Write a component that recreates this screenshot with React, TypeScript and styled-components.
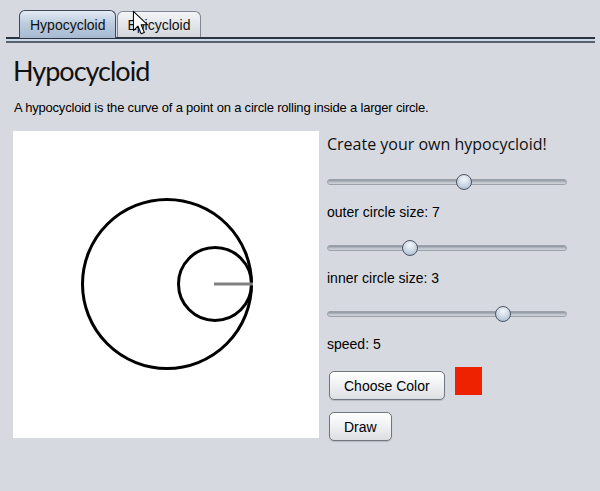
import React from "react";
import styled, { createGlobalStyle } from "styled-components";

const Global = createGlobalStyle`
  html, body { margin: 0; padding: 0; background: #d6d9df; }
  body { font-family: "Liberation Sans", Arial, sans-serif; color: #000; }
`;

const Page = styled.div`
  position: relative;
  width: 600px;
  height: 491px;
  background: #d6d9df;
  display: flex;
  flex-direction: column;
  overflow: hidden;
`;

const TabStrip = styled.div`
  display: flex;
  align-items: flex-end;
  padding: 10px 0 0 19px;
  height: 27px;
`;

const Tab = styled.div<{ $active?: boolean }>`
  box-sizing: border-box;
  height: ${(p) => (p.$active ? 28 : 26)}px;
  padding: 0 ${(p) => (p.$active ? 10 : 9)}px;
  margin-right: 1px;
  display: flex;
  align-items: center;
  font-size: 14px;
  border: 1px solid ${(p) => (p.$active ? "#3d4859" : "#7f8794")};
  border-bottom: none;
  border-radius: 6px 6px 0 0;
  background: ${(p) =>
    p.$active
      ? "linear-gradient(#e4ebf3 0%, #bccde0 45%, #a6b9d0 100%)"
      : "linear-gradient(#f4f5f7 0%, #e3e5e9 50%, #d3d6dc 100%)"};
  color: #111;
  margin-bottom: ${(p) => (p.$active ? -1 : 0)}px;
  position: relative;
`;

const TabRule = styled.div`
  margin: 0 5px 0 6px;
  height: 2px;
  background: #2c3440;
  border-bottom: 2px solid #c9d8ea;
  box-shadow: 0 2px 0 0 #59616d;
  margin-bottom: 2px;
`;

const Content = styled.div`
  padding: 11px 13px 0 13px;
  display: flex;
  flex-direction: column;
`;

const Title = styled.h1`
  margin: 0;
  font-family: Lato, "Open Sans", sans-serif;
  font-weight: 400;
  font-size: 27px;
  letter-spacing: -1px;
  line-height: 34px;
  color: #111;
`;

const Description = styled.p`
  margin: 11px 0 0 1px;
  font-size: 13px;
  letter-spacing: -0.2px;
  line-height: 18px;
`;

const Main = styled.div`
  display: flex;
  gap: 8px;
  margin-top: 14px;
`;

const Canvas = styled.div`
  width: 306px;
  height: 307px;
  background: #fff;
  flex: none;
`;

const Controls = styled.div`
  display: flex;
  flex-direction: column;
  width: 240px;
`;

const Subtitle = styled.div`
  margin-top: 2px;
  font-family: "Open Sans", "Noto Sans", sans-serif;
  font-size: 16px;
  line-height: 22px;
  color: #111;
`;

const SliderBox = styled.div<{ $top: number }>`
  position: relative;
  height: 20px;
  margin-top: ${(p) => p.$top}px;
  display: flex;
  align-items: center;
`;

const Track = styled.div`
  width: 100%;
  height: 6px;
  box-sizing: border-box;
  border-radius: 3px;
  border: 1px solid #9ba1ab;
  background: linear-gradient(#8d939d, #bfc4cc 60%, #d0d4da);
`;

const Thumb = styled.div`
  position: absolute;
  top: 2px;
  width: 16px;
  height: 16px;
  box-sizing: border-box;
  margin-left: -8px;
  border-radius: 50%;
  border: 1px solid #4c5665;
  background: radial-gradient(circle at 50% 30%, #f4f7fa 0%, #c9d5e2 55%, #9fb0c4 100%);
`;

const Label = styled.div`
  margin-top: 10px;
  font-size: 14px;
  line-height: 20px;
`;

const ColorRow = styled.div`
  display: flex;
  align-items: flex-start;
  gap: 10px;
  margin-top: 13px;
  padding-left: 2px;
`;

const Button = styled.button`
  box-sizing: border-box;
  height: 29px;
  padding: 0 14px;
  margin-top: 4px;
  font-family: "Liberation Sans", Arial, sans-serif;
  font-size: 14px;
  color: #000;
  border: 1px solid #6f7680;
  border-radius: 5px;
  background: linear-gradient(#ffffff 0%, #f1f2f4 45%, #dcdfe3 100%);
  box-shadow: 0 1px 1px rgba(0, 0, 0, 0.15);
`;

const Swatch = styled.div<{ $color: string }>`
  width: 27px;
  height: 28px;
  background: ${(p) => p.$color};
`;

const DrawRow = styled.div`
  margin-top: 8px;
  padding-left: 2px;
`;

const Cursor = styled.svg`
  position: absolute;
  left: 132px;
  top: 10px;
`;

function Slider({ frac, top }: { frac: number; top: number }) {
  return (
    <SliderBox $top={top}>
      <Track />
      <Thumb style={{ left: `${8 + frac * 224}px` }} />
    </SliderBox>
  );
}

export default function App() {
  return (
    <Page>
      <Global />
      <TabStrip>
        <Tab $active>Hypocycloid</Tab>
        <Tab>Epicycloid</Tab>
      </TabStrip>
      <TabRule />
      <Content>
        <Title>Hypocycloid</Title>
        <Description>
          A hypocycloid is the curve of a point on a circle rolling inside a larger circle.
        </Description>
        <Main>
          <Canvas>
            <svg width="306" height="307" viewBox="0 0 306 307">
              <circle cx="154" cy="153" r="84.5" fill="none" stroke="#000" strokeWidth="3" />
              <circle cx="202" cy="153" r="36.5" fill="none" stroke="#000" strokeWidth="3" />
              <line x1="201" y1="153" x2="240" y2="153" stroke="#808080" strokeWidth="3" />
            </svg>
          </Canvas>
          <Controls>
            <Subtitle>Create your own hypocycloid!</Subtitle>
            <Slider frac={0.576} top={17} />
            <Label>outer circle size: 7</Label>
            <Slider frac={0.336} top={16} />
            <Label>inner circle size: 3</Label>
            <Slider frac={0.749} top={16} />
            <Label>speed: 5</Label>
            <ColorRow>
              <Button>Choose Color</Button>
              <Swatch $color="#ee2200" />
            </ColorRow>
            <DrawRow>
              <Button>Draw</Button>
            </DrawRow>
          </Controls>
        </Main>
      </Content>
      <Cursor width="17" height="27" viewBox="0 0 13 21">
        <path d="M1 1 L1 16 L4.5 12.5 L7 18.5 L9.5 17.5 L7 11.5 L12 11.5 Z" fill="#fff" stroke="#000" strokeWidth="0.8" strokeLinejoin="round" />
      </Cursor>
    </Page>
  );
}
